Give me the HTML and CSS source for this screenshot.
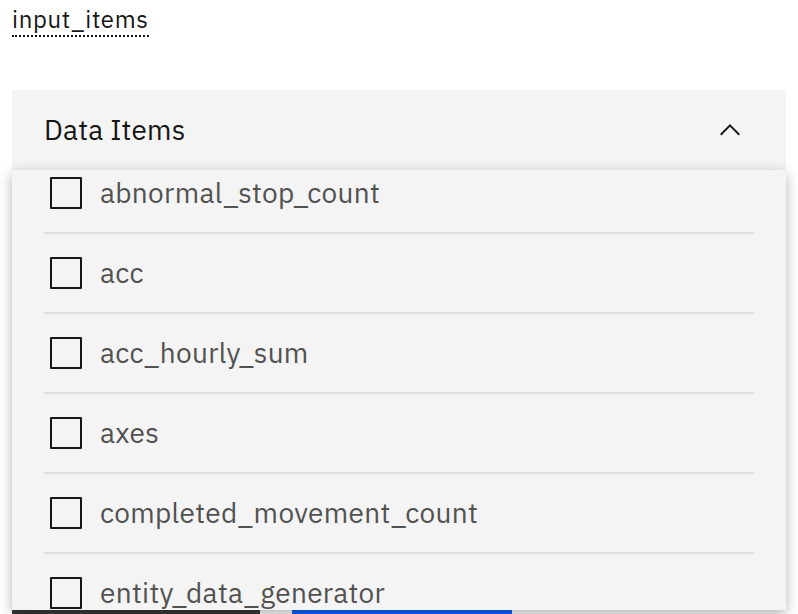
FILE: index.html
```html
<!DOCTYPE html>
<html lang="en">
<head>
<meta charset="utf-8">
<title>input_items</title>
<link rel="stylesheet" href="styles.css">
</head>
<body>
<div class="page">
  <div class="label-row"><span class="label">input_items</span></div>
  <div class="multiselect">
    <div class="field">
      <span class="field-text">Data Items</span>
      <svg class="chevron" width="32" height="32" viewBox="0 0 32 32"><path d="M16 10l10 10-1.4 1.4L16 12.8l-8.6 8.6L6 20 16 10z" fill="#161616"/></svg>
    </div>
    <div class="menu">
      <ul class="list">
        <li class="item"><div class="option"><span class="box"></span><span class="text">abnormal_stop_count</span></div></li>
        <li class="item"><div class="option"><span class="box"></span><span class="text">acc</span></div></li>
        <li class="item"><div class="option"><span class="box"></span><span class="text">acc_hourly_sum</span></div></li>
        <li class="item"><div class="option"><span class="box"></span><span class="text">axes</span></div></li>
        <li class="item"><div class="option"><span class="box"></span><span class="text">completed_movement_count</span></div></li>
        <li class="item"><div class="option"><span class="box"></span><span class="text">entity_data_generator</span></div></li>
      </ul>
    </div>
  </div>
  <div class="buttons">
    <button class="btn btn-secondary" aria-label="Cancel"></button>
    <button class="btn btn-primary" aria-label="Save"></button>
  </div>
</div>
</body>
</html>
```
FILE: styles.css
```css
* { box-sizing: border-box; }
html, body { margin: 0; padding: 0; background: #ffffff; }
body {
  font-family: "IBM Plex Sans", Roboto, "Noto Sans", sans-serif;
  color: #161616;
}
.page { height: 614px; overflow: hidden; padding: 3px 12px 0; }
.label-row { height: 87px; }
.label {
  display: inline-block;
  font-size: 24px;
  line-height: 32px;
  letter-spacing: 0.64px;
  color: #161616;
  border-bottom: 2px dotted #161616;
}
.multiselect { position: relative; margin-bottom: 440px; }
.field {
  height: 80px;
  background: #f4f4f4;
  display: flex;
  align-items: center;
  justify-content: space-between;
  padding: 0 40px 0 32px;
}
.field-text { font-size: 28px; letter-spacing: 0.2px; color: #161616; margin-top: -2px; }
.chevron { display: block; }
.menu {
  position: absolute;
  left: 0;
  right: 0;
  top: 80px;
  height: 440px;
  overflow: hidden;
  background: #f4f4f4;
  box-shadow: 0 4px 12px rgba(0, 0, 0, 0.3);
  z-index: 2;
}
.list { list-style: none; margin: -18px 0 0; padding: 0; }
.item { height: 80px; }
.option {
  height: 80px;
  margin: 0 32px;
  display: flex;
  align-items: center;
  border-top: 2px solid transparent;
}
.item + .item .option { border-top-color: #e0e0e0; }
.box {
  width: 32px;
  height: 32px;
  border: 2px solid #161616;
  border-radius: 1px;
  margin-left: 6px;
  margin-right: 18px;
  flex: none;
}
.text { font-size: 28px; letter-spacing: 0.32px; color: #525252; margin-top: -2px; }
.buttons { display: flex; gap: 32px; }
.btn {
  height: 96px;
  border: 0;
  padding: 0;
}
.btn-secondary { width: 248px; background: #393939; }
.btn-primary { width: 220px; background: #0f62fe; }
```
